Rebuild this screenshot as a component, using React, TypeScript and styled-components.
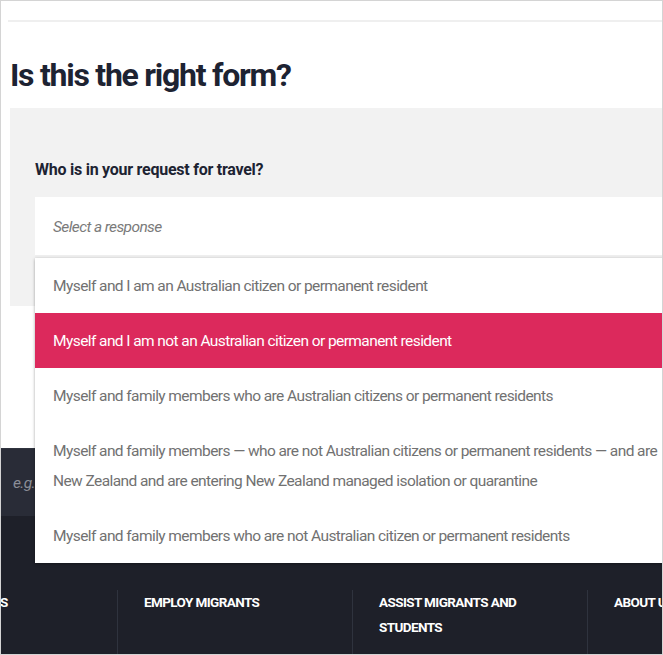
import styled, { createGlobalStyle } from "styled-components";

const FONT = `Roboto, "Liberation Sans", sans-serif`;

const GlobalStyle = createGlobalStyle`
  body {
    margin: 0;
    background: #ffffff;
    font-family: ${FONT};
  }
`;

type Option = {
  lines: string[];
  active?: boolean;
};

const OPTIONS: Option[] = [
  { lines: ["Myself and I am an Australian citizen or permanent resident"] },
  {
    lines: ["Myself and I am not an Australian citizen or permanent resident"],
    active: true,
  },
  {
    lines: [
      "Myself and family members who are Australian citizens or permanent residents",
    ],
  },
  {
    lines: [
      "Myself and family members — who are not Australian citizens or permanent residents — and are",
      "New Zealand and are entering New Zealand managed isolation or quarantine",
    ],
  },
  {
    lines: [
      "Myself and family members who are not Australian citizen or permanent residents",
    ],
  },
];

const NAV = [
  ["VISA PATHWAYS"],
  ["EMPLOY MIGRANTS"],
  ["ASSIST MIGRANTS AND", "STUDENTS"],
  ["ABOUT US"],
];

const App = () => {
  return (
    <>
      <GlobalStyle />
      <Frame>
        <TopRule />
        <Title>Is this the right form?</Title>
        <Panel>
          <Label>Who is in your request for travel?</Label>
          <SelectWrap>
            <SelectBox>Select a response</SelectBox>
            <Menu>
              {OPTIONS.map((opt, i) => (
                <MenuItem key={i} $active={opt.active}>
                  {opt.lines.map((line, j) => (
                    <Line key={j}>{line}</Line>
                  ))}
                </MenuItem>
              ))}
            </Menu>
          </SelectWrap>
        </Panel>
        <Footer>
          <SearchBand>
            <SearchInput placeholder="e.g. visa, citizenship" />
          </SearchBand>
          <NavRow>
            {NAV.map((item, i) => (
              <NavItem key={i}>
                {item.map((line, j) => (
                  <Line key={j}>{line}</Line>
                ))}
              </NavItem>
            ))}
          </NavRow>
        </Footer>
      </Frame>
    </>
  );
};

export default App;

const Frame = styled.div`
  position: relative;
  width: 663px;
  height: 655px;
  box-sizing: border-box;
  border: 1px solid #d4d4d4;
  overflow: hidden;
  background: #ffffff;
`;

const TopRule = styled.div`
  margin: 19px 0 0 7px;
  height: 2px;
  background: #efefef;
`;

const Title = styled.h1`
  margin: 33px 0 0 9px;
  font-family: ${FONT};
  font-size: 32px;
  line-height: 40px;
  font-weight: 700;
  letter-spacing: -1.25px;
  color: #1d2332;
`;

const Panel = styled.div`
  margin: 13px 0 0 9px;
  width: 720px;
  padding: 51px 0 48px 25px;
  box-sizing: border-box;
  background: #f2f2f2;
`;

const Label = styled.div`
  font-size: 16px;
  line-height: 22px;
  font-weight: 700;
  letter-spacing: -0.25px;
  color: #1d2332;
  margin-bottom: 16px;
`;

const SelectWrap = styled.div`
  position: relative;
  width: 690px;
`;

const SelectBox = styled.div`
  height: 58px;
  line-height: 60px;
  padding-left: 18px;
  background: #ffffff;
  border-bottom: 3px solid #efefef;
  font-size: 15.5px;
  font-style: italic;
  letter-spacing: -0.6px;
  color: #7a7a7a;
`;

const Menu = styled.div`
  position: absolute;
  top: 100%;
  left: 0;
  right: 0;
  z-index: 2;
  background: #ffffff;
  box-shadow: 0 1px 3px rgba(0, 0, 0, 0.35);
`;

const MenuItem = styled.div<{ $active?: boolean }>`
  padding: 12.5px 18px;
  font-size: 15.5px;
  line-height: 30px;
  letter-spacing: -0.58px;
  color: ${(p) => (p.$active ? "#ffffff" : "#717171")};
  background: ${(p) => (p.$active ? "#dc295c" : "#ffffff")};
`;

const Line = styled.div`
  white-space: nowrap;
`;

const Footer = styled.div`
  margin-top: 142px;
  background: #1e2029;
`;

const SearchBand = styled.div`
  height: 68px;
  background: #292c37;
  border-top: 1px solid #30343f;
  box-sizing: border-box;
  display: flex;
  align-items: center;
`;

const SearchInput = styled.input`
  flex: 1;
  height: 100%;
  border: none;
  outline: none;
  background: transparent;
  padding-left: 12px;
  font-family: ${FONT};
  font-size: 15.5px;
  letter-spacing: -0.6px;
  color: #ffffff;
  &::placeholder {
    color: #8b8e97;
    font-style: italic;
  }
`;

const NavRow = styled.div`
  display: flex;
  margin-left: -115px;
  padding-top: 74px;
  height: 142px;
  box-sizing: border-box;
`;

const NavItem = styled.div`
  flex: 0 0 235px;
  box-sizing: border-box;
  padding: 0 26px;
  border-left: 1px solid #2f333e;
  font-size: 13.5px;
  line-height: 25px;
  font-weight: 700;
  letter-spacing: -0.6px;
  color: #ffffff;
  &:first-child {
    flex-basis: 231px;
    border-left: none;
  }
`;
